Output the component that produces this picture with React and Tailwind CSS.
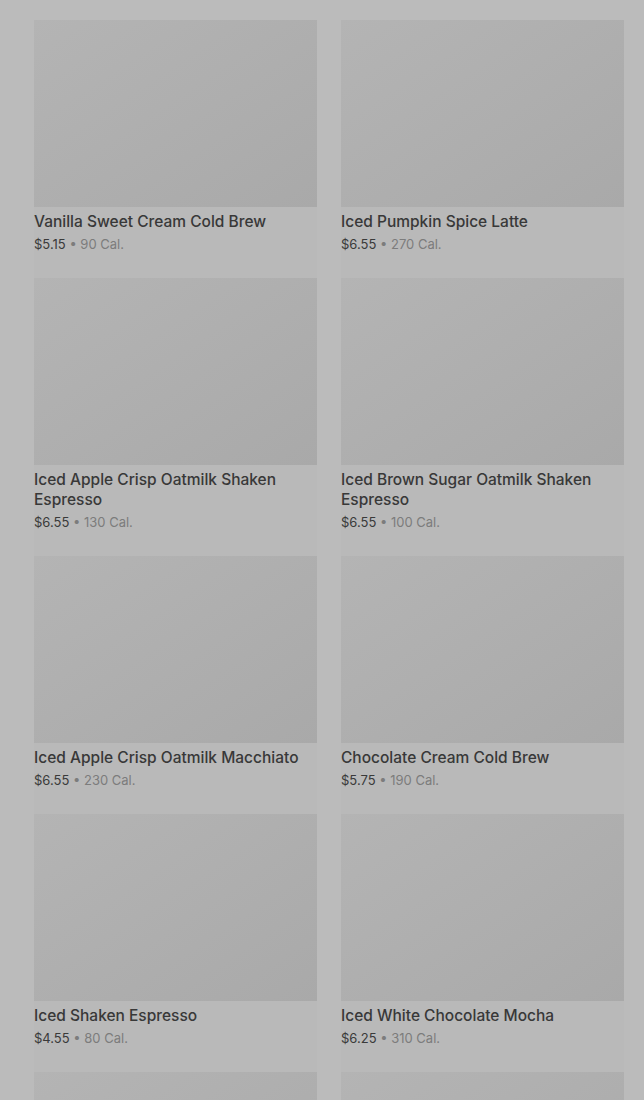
import React from "react";

const drinks = [
  { name: "Vanilla Sweet Cream Cold Brew", price: "$5.15", cal: "90 Cal." },
  { name: "Iced Pumpkin Spice Latte", price: "$6.55", cal: "270 Cal." },
  { name: "Iced Apple Crisp Oatmilk Shaken Espresso", price: "$6.55", cal: "130 Cal." },
  { name: "Iced Brown Sugar Oatmilk Shaken Espresso", price: "$6.55", cal: "100 Cal." },
  { name: "Iced Apple Crisp Oatmilk Macchiato", price: "$6.55", cal: "230 Cal." },
  { name: "Chocolate Cream Cold Brew", price: "$5.75", cal: "190 Cal." },
  { name: "Iced Shaken Espresso", price: "$4.55", cal: "80 Cal." },
  { name: "Iced White Chocolate Mocha", price: "$6.25", cal: "310 Cal." },
];

const App = () => {
  return (
    <div
      className="h-[1100px] overflow-hidden bg-[#bbbbbb] pl-[34px] pr-[20px] pt-[20px]"
      style={{ fontFamily: "Inter, 'Noto Sans', sans-serif" }}
    >
      <div className="grid grid-cols-2 gap-x-6">
        {drinks.map((d) => (
          <div key={d.name} className="bg-[#b9b9b9] pb-[23px]">
            <div className="h-[187px] bg-gradient-to-br from-[#b4b4b4] to-[#a9a9a9]" />
            <div className="mt-[5px] text-[15.5px] font-medium leading-5 text-[#383838] pr-2">
              {d.name}
            </div>
            <div className="mt-0.5 text-[13px] leading-[21px] text-[#3a3a3a]">
              {d.price}
              <span className="text-[#7c7c7c]"> • {d.cal}</span>
            </div>
          </div>
        ))}
        {/* next row, only the top of the pictures shows */}
        <div className="h-[187px] bg-gradient-to-br from-[#b4b4b4] to-[#a9a9a9]" />
        <div className="h-[187px] bg-gradient-to-br from-[#b4b4b4] to-[#a9a9a9]" />
      </div>
    </div>
  );
};

export default App;
